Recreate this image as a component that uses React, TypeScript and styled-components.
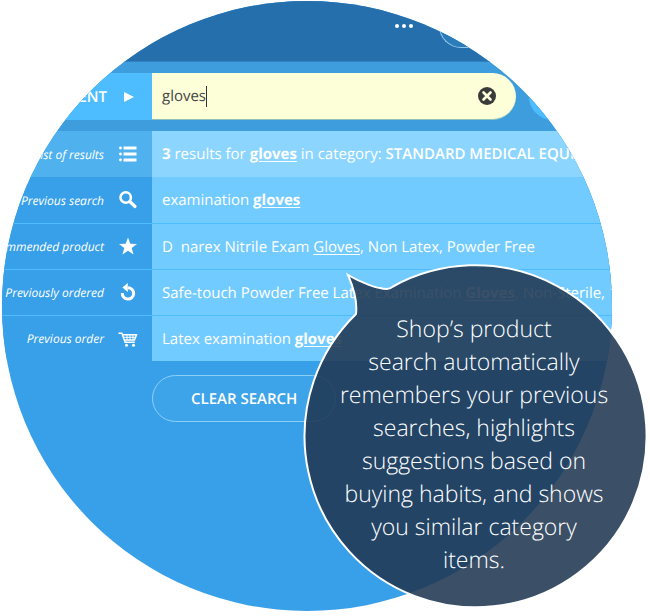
import React, { useState } from "react";
import styled, { createGlobalStyle } from "styled-components";

const GlobalStyle = createGlobalStyle`
  *, *::before, *::after { box-sizing: border-box; }
  body { margin: 0; background: #fff; text-rendering: geometricPrecision; }
  body, button, input { font-family: "Open Sans", "Noto Sans", sans-serif; }
  button, input { text-rendering: inherit; }
`;

const Stage = styled.main`
  position: relative;
  max-width: 650px;
  padding: 1px 38px 5px 2px;
  overflow: hidden;
`;

const Lens = styled.section`
  aspect-ratio: 1;
  border-radius: 50%;
  overflow: hidden;
  background: #389fe9;
  color: #fff;
`;

const Header = styled.header`
  display: flex;
  justify-content: flex-end;
  align-items: flex-start;
  gap: 26px;
  height: 61px;
  padding-top: 3px;
  background: #256fad;
  border-bottom: 1px solid #3081c1;
`;

const MoreButton = styled.button`
  display: flex;
  align-items: center;
  gap: 3px;
  height: 44px;
  padding: 0;
  border: 0;
  background: none;
`;

const Dot = styled.span`
  width: 4px;
  height: 4px;
  border-radius: 50%;
  background: #fff;
`;

const AccountButton = styled.button`
  width: 173px;
  height: 44px;
  border: 1px solid #8fc6ea;
  border-right: 0;
  border-radius: 22px 0 0 22px;
  background: #2c7cba;
`;

const SearchBar = styled.form`
  display: grid;
  grid-template-columns: 150px 1fr 83px;
  padding: 11px 0;
  background: #3d9ddd;
`;

const CategoryButton = styled.button`
  display: flex;
  align-items: center;
  justify-content: flex-end;
  gap: 17px;
  min-width: 0;
  height: 47px;
  padding: 0 18px 0 0;
  border: 0;
  background: #4dbdff;
  color: #fff;
  font-size: 15px;
  font-weight: 600;
`;

const SearchField = styled.label`
  display: flex;
  align-items: center;
  height: 47px;
  margin-right: 13px;
  padding: 0 20px 0 10px;
  border-bottom: 1px solid #8fc3b8;
  border-radius: 0 24px 24px 0;
  background: #fdffd9;
  cursor: text;
`;

const SearchInput = styled.input`
  field-sizing: content;
  min-width: 4px;
  max-width: 90%;
  padding: 0;
  border: 0;
  outline: 0;
  background: none;
  color: #444;
  font-size: 15px;
`;

const Caret = styled.span`
  width: 1px;
  height: 21px;
  background: #333;
  ${SearchInput}:focus + & { visibility: hidden; }
`;

const ClearIcon = styled.button`
  display: flex;
  margin-left: auto;
  padding: 0;
  border: 0;
  background: none;
`;

const SubmitButton = styled.button`
  height: 47px;
  border: 0;
  border-radius: 24px 0 0 24px;
  background: #4dbdff;
`;

const Suggestions = styled.ul`
  margin: 0;
  padding: 0;
  list-style: none;
`;

const Suggestion = styled.li<{ $active?: boolean }>`
  display: grid;
  grid-template-columns: 150px 1fr;
  height: 46px;
  background: ${(p) => (p.$active ? "#4fb2ee" : "#389fe9")};
  & + & > * { border-top: 1px solid #4dbdff; }
`;

const Kind = styled.div`
  display: flex;
  align-items: center;
  justify-content: flex-end;
  gap: 14px;
  min-width: 0;
  padding-right: 14px;
  font-size: 12px;
  font-style: italic;
  white-space: nowrap;
  svg { flex: none; }
`;

const Result = styled.a<{ $active?: boolean }>`
  display: flex;
  align-items: center;
  min-width: 0;
  padding-left: 10px;
  overflow: hidden;
  background: ${(p) => (p.$active ? "#8cd5ff" : "#72cbff")};
  color: #fff;
  font-size: 15px;
  text-decoration: none;
  white-space: pre;
`;

const Match = styled.u<{ $strong?: boolean }>`
  font-weight: ${(p) => (p.$strong ? 700 : 400)};
  text-underline-offset: 2px;
`;

const Category = styled.span`
  font-weight: 600;
`;

const ClearButton = styled.button`
  height: 47px;
  margin: 14px 0 0 150px;
  padding: 0 38px;
  border: 1px solid #8dd0f7;
  border-radius: 24px;
  background: #3da4e9;
  color: #fff;
  font-size: 15px;
  font-weight: 600;
`;

const Bubble = styled.aside`
  position: absolute;
  top: 264px;
  right: 1px;
  width: 346px;
  height: 346px;
  padding: 48px 4px 0 0;
  color: #fff;
  font-size: 23px;
  font-weight: 300;
  line-height: 33px;
  text-align: center;
`;

const BubbleShape = styled.svg`
  position: absolute;
  inset: 0;
`;

const BubbleText = styled.p`
  position: relative;
  margin: 0;
`;

const BubbleLine = styled.span`
  display: block;
`;

const ListIcon = () => (
  <svg width="20" height="20" viewBox="0 0 20 20" fill="#fff" aria-hidden="true">
    <path d="M5.500 2.500h13v3h-13zM5.500 8.500h13v3h-13zM5.500 14.500h13v3h-13z" />
    <circle cx="2.500" cy="4" r="1.400" />
    <circle cx="2.500" cy="10" r="1.400" />
    <circle cx="2.500" cy="16" r="1.400" />
  </svg>
);

const SearchIcon = () => (
  <svg width="20" height="20" viewBox="0 0 20 20" fill="none" stroke="#fff" aria-hidden="true">
    <circle cx="7.700" cy="7.500" r="5.200" strokeWidth="2.600" />
    <path d="M11.800 11.500l5.200 5" strokeWidth="3.200" strokeLinecap="round" />
  </svg>
);

const StarIcon = () => (
  <svg width="20" height="20" viewBox="0 0 20 20" fill="#fff" aria-hidden="true">
    <path d="M10 .5l2.300 6.300 6.700.2-5.300 4.100 1.900 6.500L10 13.800l-5.600 3.800 1.900-6.500L1 7l6.700-.2z" />
  </svg>
);

const RepeatIcon = () => (
  <svg width="20" height="20" viewBox="0 0 20 20" fill="none" aria-hidden="true">
    <path d="M4.300 10a5.700 5.700 0 1 0 5.700-5.300" stroke="#fff" strokeWidth="3" />
    <path d="M9.800 0v9L4.400 4.500z" fill="#fff" />
  </svg>
);

const CartIcon = () => (
  <svg width="20" height="20" viewBox="0 0 20 20" fill="none" stroke="#fff" aria-hidden="true">
    <path d="M.5 4.300h3.400l3.200 9h9.700" strokeWidth="1.500" />
    <path d="M4.500 5.800h14l-2 5.200H6.200" strokeWidth="1.500" />
    <path d="M5.500 8.300h12M9 6v5M12 6v5M15 6v5" strokeWidth="1" />
    <circle cx="8.500" cy="16.200" r="1.500" fill="#fff" stroke="none" />
    <circle cx="15.500" cy="16.200" r="1.500" fill="#fff" stroke="none" />
  </svg>
);

const suggestions = [
  {
    kind: "List of results",
    icon: <ListIcon />,
    active: true,
    text: (
      <span>
        <b>3</b> results for <Match $strong>gloves</Match> in category:{" "}
        <Category>STANDARD MEDICAL EQUIPMENT</Category>
      </span>
    ),
  },
  {
    kind: "Previous search",
    icon: <SearchIcon />,
    text: <span>examination <Match $strong>gloves</Match></span>,
  },
  {
    kind: "Recommended product",
    icon: <StarIcon />,
    text: <span>D{"  "}narex Nitrile Exam <Match>Gloves</Match>, Non Latex, Powder Free</span>,
  },
  {
    kind: "Previously ordered",
    icon: <RepeatIcon />,
    text: (
      <span>
        Safe-touch Powder Free Latex Examination <Match $strong>Gloves</Match>, Non-Sterile, 100
      </span>
    ),
  },
  {
    kind: "Previous order",
    icon: <CartIcon />,
    text: <span>Latex examination <Match $strong>gloves</Match></span>,
  },
];

const message = [
  "Shop’s product",
  "search automatically",
  "remembers your previous",
  "searches, highlights",
  "suggestions based on",
  "buying habits, and shows",
  "you similar category",
  "items.",
];

export default function App() {
  const [query, setQuery] = useState("gloves");
  const clear = () => setQuery("");

  return (
    <>
      <GlobalStyle />
      <Stage>
        <Lens>
          <Header>
            <MoreButton type="button" aria-label="More">
              <Dot /><Dot /><Dot />
            </MoreButton>
            <AccountButton type="button" aria-label="Account" />
          </Header>
          <SearchBar onSubmit={(e) => e.preventDefault()}>
            <CategoryButton type="button">
              EQUIPMENT
              <svg width="10" height="10" viewBox="0 0 10 10" fill="#fff" aria-hidden="true">
                <path d="M0 0l10 5-10 5z" />
              </svg>
            </CategoryButton>
            <SearchField>
              <SearchInput
                type="text"
                aria-label="Search products"
                value={query}
                onChange={(e) => setQuery(e.target.value)}
              />
              <Caret />
              <ClearIcon type="button" aria-label="Clear text" onClick={clear}>
                <svg width="18" height="18" viewBox="0 0 18 18" aria-hidden="true">
                  <circle cx="9" cy="9" r="9" fill="#3b3b3b" />
                  <path d="M5.500 5.500l7 7M12.500 5.500l-7 7" stroke="#fdffd9" strokeWidth="2.600" strokeLinecap="round" />
                </svg>
              </ClearIcon>
            </SearchField>
            <SubmitButton type="submit" aria-label="Search" />
          </SearchBar>
          <Suggestions>
            {suggestions.map((s) => (
              <Suggestion key={s.kind} $active={s.active}>
                <Kind>{s.kind}{s.icon}</Kind>
                <Result href="#" $active={s.active}>{s.text}</Result>
              </Suggestion>
            ))}
          </Suggestions>
          <ClearButton type="button" onClick={clear}>CLEAR SEARCH</ClearButton>
        </Lens>
        <Bubble>
          <BubbleShape viewBox="0 0 346 346" aria-hidden="true">
            <path
              d="M53 50Q55 34 45 11C57 18 74 25 84 25Q87 25 90 22.500A171 171 0 1 1 53 50Z"
              fill="#203852"
              fillOpacity="0.88"
              stroke="#fff"
              strokeWidth="2"
            />
          </BubbleShape>
          <BubbleText>
            {message.map((line) => (
              <BubbleLine key={line}>{line} </BubbleLine>
            ))}
          </BubbleText>
        </Bubble>
      </Stage>
    </>
  );
}
